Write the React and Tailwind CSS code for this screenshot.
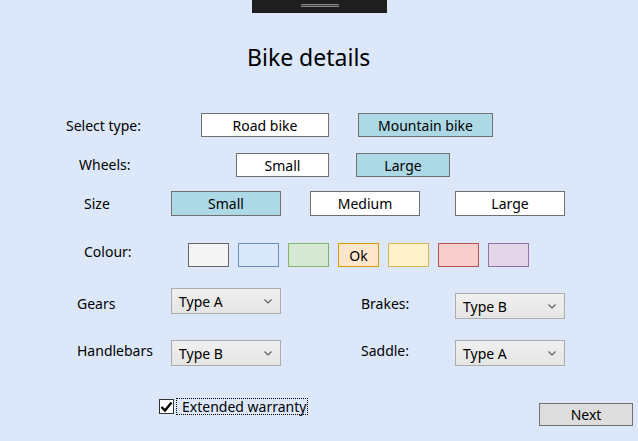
import React from "react";

const font = { fontFamily: '"Noto Sans", "Open Sans", sans-serif' };

function Btn({ children, active, className = "" }) {
  return (
    <div
      className={`flex items-center justify-center border border-[#707070] text-[14px] text-black ${
        active ? "bg-[#add8e6]" : "bg-white"
      } ${className}`}
    >
      {children}
    </div>
  );
}

function Combo({ value, className = "" }) {
  return (
    <div
      className={`flex items-center justify-between w-[110px] h-[26px] border border-[#acacac] bg-gradient-to-b from-[#f0f0f0] to-[#e5e5e5] pl-[7px] pr-[8px] text-[14px] text-black ${className}`}
    >
      <span>{value}</span>
      <svg width="8" height="5" viewBox="0 0 8 5">
        <path d="M0.5 0.5 L4 4 L7.5 0.5" fill="none" stroke="#606060" strokeWidth="1.2" />
      </svg>
    </div>
  );
}

const swatches = [
  ["bg-[#f4f4f4]", "border-[#666666]", ""],
  ["bg-[#dae8fc]", "border-[#6c8ebf]", ""],
  ["bg-[#d5e8d4]", "border-[#82b366]", ""],
  ["bg-[#ffe6cc]", "border-[#d79b00]", "Ok"],
  ["bg-[#fff2cc]", "border-[#d6b656]", ""],
  ["bg-[#f8cecc]", "border-[#b85450]", ""],
  ["bg-[#e1d5e7]", "border-[#9673a6]", ""],
];

export default function App() {
  return (
    <div className="w-[638px] h-[441px] bg-[#dce8fa] overflow-hidden text-black" style={font}>
      {/* window grip */}
      <div className="ml-[252px] w-[135px] h-[13px] bg-[#1e1e1e] pt-[4px] pl-[49px]">
        <div className="w-[38px] h-[1px] bg-[#8a8a8a]" />
        <div className="w-[38px] h-[1px] bg-[#3a3a3a]" />
        <div className="w-[38px] h-[1px] bg-[#8a8a8a]" />
      </div>

      <div className="mt-[28px] h-[32px] flex pl-[247px]">
        <h1 className="text-[23px] leading-[32px] whitespace-nowrap">Bike details</h1>
      </div>

      {/* type */}
      <div className="mt-[40px] flex items-center h-[24px] pl-[66px]">
        <div className="w-[135px] text-[14px] leading-[20px] mt-[1px]">Select type:</div>
        <Btn className="w-[128px] h-[24px]">Road bike</Btn>
        <Btn active className="ml-[29px] w-[135px] h-[24px]">Mountain bike</Btn>
      </div>

      {/* wheels */}
      <div className="mt-[16px] flex items-center h-[24px] pl-[79px]">
        <div className="w-[157px] text-[14px] leading-[20px] mt-[-1px]">Wheels:</div>
        <Btn className="w-[93px] h-[24px]">Small</Btn>
        <Btn active className="ml-[27px] w-[94px] h-[24px]">Large</Btn>
      </div>

      {/* size */}
      <div className="mt-[14px] flex items-center h-[25px] pl-[84px]">
        <div className="w-[87px] text-[14px] leading-[20px]">Size</div>
        <Btn active className="w-[110px] h-[25px]">Small</Btn>
        <Btn className="ml-[29px] w-[110px] h-[25px]">Medium</Btn>
        <Btn className="ml-[35px] w-[110px] h-[25px]">Large</Btn>
      </div>

      {/* colour */}
      <div className="mt-[27px] flex items-start h-[24px] pl-[84px]">
        <div className="w-[104px] text-[14px] leading-[20px] mt-[-1px]">Colour:</div>
        <div className="flex gap-[9px]">
          {swatches.map(([bg, bd, label], i) => (
            <div
              key={i}
              className={`w-[41px] h-[24px] border ${bg} ${bd} flex items-center justify-center text-[14px]`}
            >
              {label}
            </div>
          ))}
        </div>
      </div>

      {/* gears / brakes */}
      <div className="mt-[21px] flex items-start h-[31px] pl-[77px]">
        <div className="w-[94px] text-[14px] leading-[20px] mt-[6px]">Gears</div>
        <Combo value="Type A" />
        <div className="ml-[80px] w-[94px] text-[14px] leading-[20px] mt-[6px]">Brakes:</div>
        <Combo value="Type B" className="mt-[5px]" />
      </div>

      {/* handlebars / saddle */}
      <div className="mt-[21px] flex items-start h-[26px] pl-[77px]">
        <div className="w-[94px] text-[14px] leading-[20px] mt-[1px]">Handlebars</div>
        <Combo value="Type B" />
        <div className="ml-[80px] w-[94px] text-[14px] leading-[20px] mt-[1px]">Saddle:</div>
        <Combo value="Type A" />
      </div>

      {/* warranty / next */}
      <div className="mt-[32px] flex items-start pl-[159px]">
        <label className="flex items-center w-[146px]">
          <div className="w-[15px] h-[15px] shrink-0 border border-[#333333] bg-white flex items-center justify-center">
            <svg width="13" height="12" viewBox="0 0 13 12">
              <path d="M1.5 6 L5 9.5 L11.5 1.5" fill="none" stroke="#000" strokeWidth="2.4" />
            </svg>
          </div>
          <span className="ml-[2px] h-[17px] flex items-center border border-dotted border-black text-[14px] leading-[16px] pl-[5px] pr-[1px] whitespace-nowrap">
            Extended warranty
          </span>
        </label>
        <Btn className="ml-[234px] mt-[5px] w-[94px] h-[23px] !bg-[#dddddd]">Next</Btn>
      </div>
    </div>
  );
}
